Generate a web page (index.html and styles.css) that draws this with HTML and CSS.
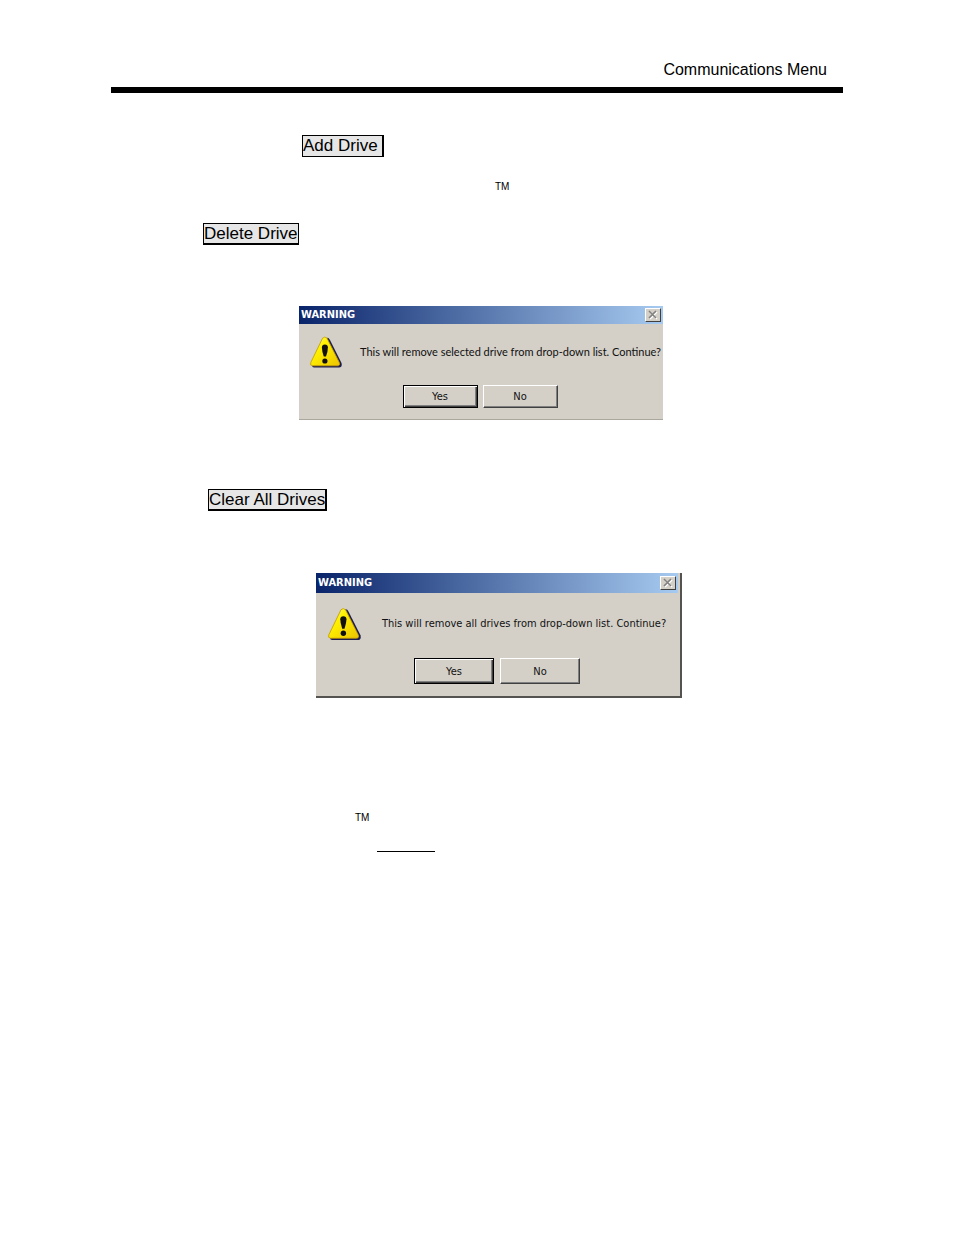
FILE: index.html
```html
<!DOCTYPE html>
<html lang="en">
<head>
<meta charset="utf-8">
<title>Communications Menu</title>
<link rel="stylesheet" href="styles.css">
</head>
<body>
<svg class="defs" aria-hidden="true">
  <defs>
    <linearGradient id="sign" x1="0" y1="0" x2="1" y2="1">
      <stop offset="0" stop-color="#fffb9a"/>
      <stop offset=".35" stop-color="#fff200"/>
      <stop offset="1" stop-color="#edc400"/>
    </linearGradient>
    <symbol id="warning" viewBox="0 0 32 32">
      <path d="M16 2Q18.500 1 20 4L31.500 27Q32.500 31.500 29 31.500H4Q2 31.500 2 29Z" fill="#1c1c50"/>
      <path d="M12.600 2.200Q14.800-.2 17 2.200L29.300 26.500Q30.500 29.800 27.500 29.800H2.500Q-.2 29.800 .8 26.500Z" fill="url(#sign)" stroke="#c39a00" stroke-width=".8"/>
      <path d="M11.900 11.500Q11.900 8.500 14.900 8.500T17.900 11.500Q17.900 15 16 20.500H13.800Q11.900 15 11.900 11.500Z" fill="#111"/>
      <circle cx="14.900" cy="25" r="2.600" fill="#111"/>
    </symbol>
    <symbol id="close" viewBox="0 0 10 10">
      <path d="M2 2L9 9M9 2L2 9" stroke="#fff" stroke-width="1.500"/>
      <path d="M1 1L8 8M8 1L1 8" stroke="#808080" stroke-width="1.600"/>
    </symbol>
  </defs>
</svg>
<header class="page-header">
  <p class="page-title">Communications Menu</p>
</header>
<main class="page">
  <button class="tag tag-add" type="button">Add Drive</button>
  <p class="mark mark-first">TM</p>
  <button class="tag tag-delete" type="button">Delete Drive</button>
  <section class="dialog dialog-remove" role="dialog" aria-labelledby="remove-title">
    <div class="bar">
      <h2 class="bar-title" id="remove-title">WARNING</h2>
      <button class="close" type="button" aria-label="Close"><svg class="cross"><use href="#close"/></svg></button>
    </div>
    <div class="message">
      <svg class="sign" aria-hidden="true"><use href="#warning"/></svg>
      <p class="text">This will remove selected drive from drop-down list. Continue?</p>
    </div>
    <div class="actions">
      <button class="choice choice-default" type="button">Yes</button>
      <button class="choice" type="button">No</button>
    </div>
  </section>
  <button class="tag tag-clear" type="button">Clear All Drives</button>
  <section class="dialog dialog-clear" role="dialog" aria-labelledby="clear-title">
    <div class="bar">
      <h2 class="bar-title" id="clear-title">WARNING</h2>
      <button class="close" type="button" aria-label="Close"><svg class="cross"><use href="#close"/></svg></button>
    </div>
    <div class="message">
      <svg class="sign" aria-hidden="true"><use href="#warning"/></svg>
      <p class="text">This will remove all drives from drop-down list. Continue?</p>
    </div>
    <div class="actions">
      <button class="choice choice-default" type="button">Yes</button>
      <button class="choice" type="button">No</button>
    </div>
  </section>
  <p class="mark mark-last">TM</p>
  <hr class="underline">
</main>
</body>
</html>
```

FILE: styles.css
```css
* {
  box-sizing: border-box;
}

body {
  margin: 0;
  padding: 60px 111px;
  background: #fff;
  color: #000;
  font-family: "Liberation Sans", Arial, sans-serif;
}

p,
h2 {
  margin: 0;
}

.defs {
  position: absolute;
  width: 0;
  height: 0;
}

.page-header {
  border-bottom: 6px solid #000;
  padding: 0 16px 7px;
}

.page-title {
  font-size: 16px;
  line-height: 20px;
  text-align: right;
}

.page {
  display: flex;
  flex-direction: column;
  align-items: flex-start;
  padding-top: 42px;
}

.tag {
  height: 22px;
  padding: 0;
  border: 1px solid #000;
  background: #e6e6e6;
  color: #000;
  font-family: inherit;
  font-size: 17px;
  line-height: 20px;
  white-space: nowrap;
}

.tag-add {
  margin-left: 191px;
  padding-right: 4px;
  border-right-width: 2px;
}

.tag-delete {
  margin: 30px 0 0 92px;
  border-bottom-width: 2px;
}

.tag-clear {
  margin: 69px 0 0 97px;
  border-right-width: 2px;
  border-bottom-width: 2px;
}

.mark {
  font-size: 10px;
  line-height: 12px;
}

.mark-first {
  margin: 24px 0 0 384px;
}

.mark-last {
  margin: 114px 0 0 244px;
}

.underline {
  width: 58px;
  margin: 27px 0 0 266px;
  border: 0;
  border-top: 1px solid #000;
}

.dialog {
  background: #d4d0c8;
  color: #111;
  font-family: "DejaVu Sans Condensed", "DejaVu Sans", sans-serif;
  font-size: 11px;
}

.dialog-remove {
  width: 364px;
  margin: 61px 0 0 188px;
  padding-bottom: 11px;
  border-bottom: 1px solid #aaa79f;
}

.dialog-clear {
  width: 366px;
  margin: 62px 0 0 205px;
  padding-bottom: 12px;
  border: solid #55534f;
  border-width: 0 2px 2px 0;
}

.bar {
  display: flex;
  align-items: center;
  justify-content: space-between;
  height: 18px;
  padding: 0 2px;
  background: linear-gradient(90deg, #0a246a, #a6caf0);
}

.bar-title {
  color: #fff;
  font-size: 11px;
  line-height: 18px;
}

.close {
  display: flex;
  align-items: center;
  justify-content: center;
  width: 16px;
  height: 14px;
  padding: 0;
  border: 1px solid;
  border-color: #fff #404040 #404040 #fff;
  background: #d4d0c8;
}

.cross {
  width: 10px;
  height: 10px;
}

.message {
  display: flex;
  align-items: center;
  gap: 18px;
  padding: 12px 0 0 11px;
}

.sign {
  flex: none;
  width: 32px;
  height: 32px;
}

.text {
  line-height: 16px;
  white-space: nowrap;
}

.dialog-remove .text {
  font-family: Lato, sans-serif;
}

.actions {
  display: flex;
  justify-content: center;
  gap: 5px;
  padding: 17px 2px 0 0;
}

.choice {
  width: 75px;
  height: 23px;
  padding: 0;
  border: 1px solid;
  border-color: #fff #404040 #404040 #fff;
  background: #d4d0c8;
  box-shadow: inset -1px -1px #808080;
  color: #111;
  font-family: inherit;
  font-size: 11px;
}

.choice-default {
  border-color: #000;
  box-shadow: inset 1px 1px #fff, inset -1px -1px #404040, inset -2px -2px #808080;
}

.dialog-clear .bar {
  height: 20px;
  margin-right: 2px;
}

.dialog-clear .message {
  gap: 21px;
  padding: 14px 0 0 12px;
}

.dialog-clear .sign {
  width: 33px;
  height: 34px;
}

.dialog-clear .actions {
  gap: 6px;
}

.dialog-clear .choice {
  width: 80px;
  height: 26px;
}
```
